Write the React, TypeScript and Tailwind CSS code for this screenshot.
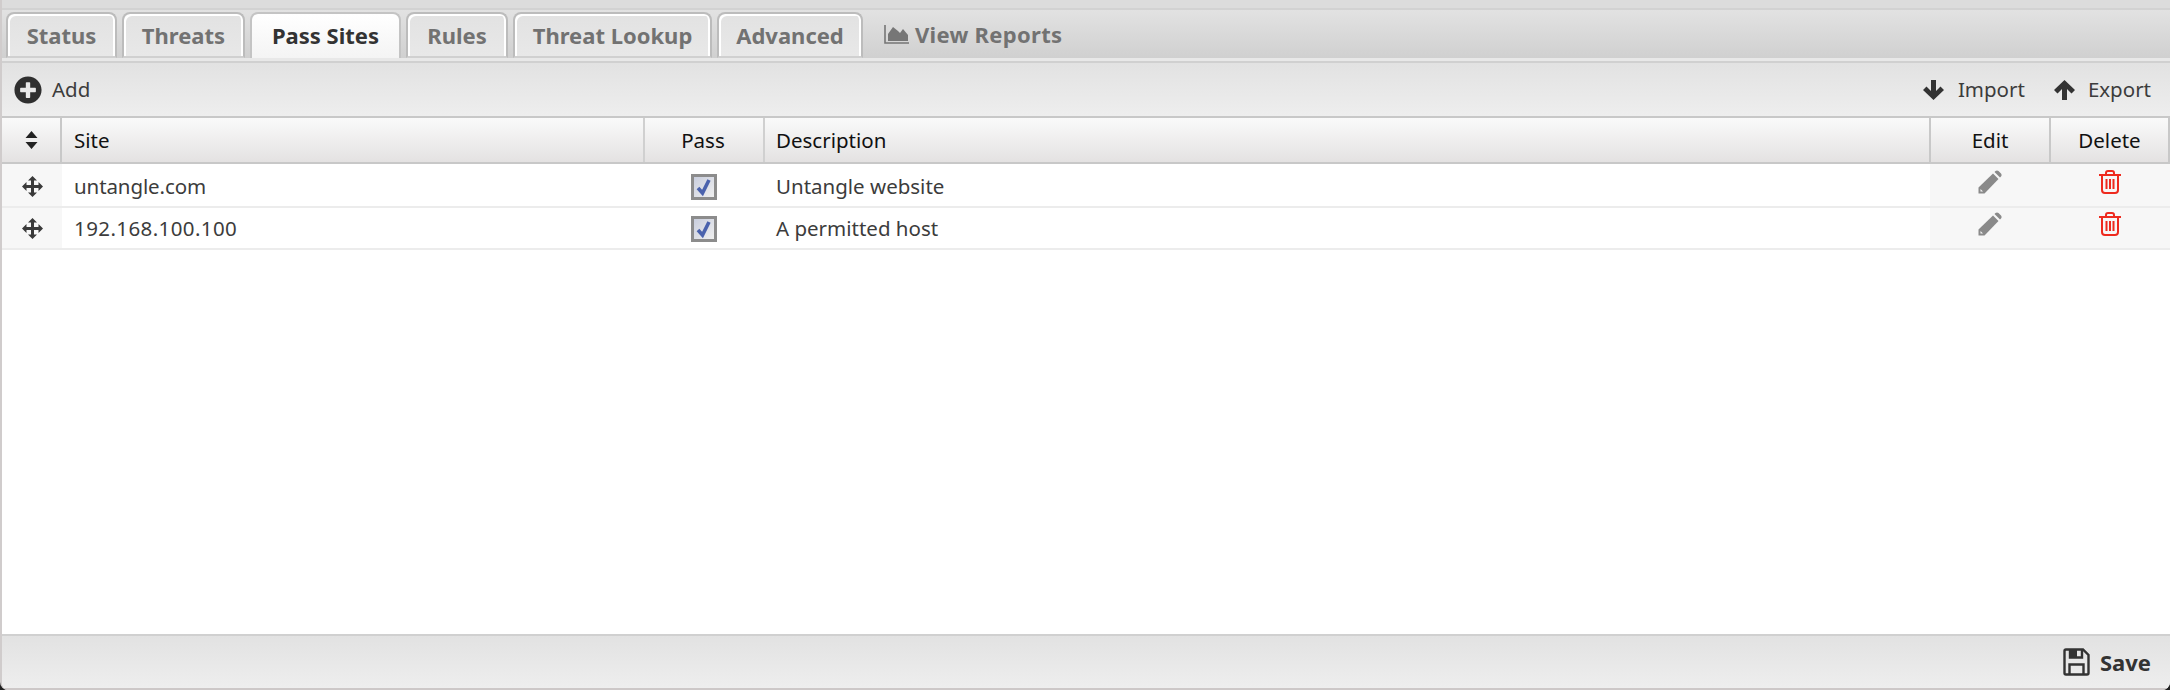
import { FaPlusCircle } from "react-icons/fa";

const tabs = [
  { label: "Status", width: "w-[111px]" },
  { label: "Threats", width: "w-[123px]" },
  { label: "Pass Sites", width: "w-[151px]", active: true },
  { label: "Rules", width: "w-[102px]" },
  { label: "Threat Lookup", width: "w-[199px]" },
  { label: "Advanced", width: "w-[146px]" },
];

const rows = [
  { site: "untangle.com", description: "Untangle website", height: "h-[44px]", textPad: "pt-[3px]", iconPad: "pt-[6px]", siteText: "tracking-[-0.1px]" },
  { site: "192.168.100.100", description: "A permitted host", height: "h-[42px]", textPad: "pt-[1px]", iconPad: "pt-[4px]", siteText: "tracking-[0.4px]" },
];

function Checkbox() {
  return (
    <div className="w-[26px] h-[26px] border-[3px] border-[#8c8c8c] bg-gradient-to-br from-[#c9cede] to-[#efefef] flex items-center justify-center">
      <svg viewBox="0 0 20 20" className="w-[20px] h-[20px]">
        <path d="M4 11 L8.5 16 L15 3" fill="none" stroke="#4a62ad" strokeWidth="3.6" />
      </svg>
    </div>
  );
}

function ArrowDown() {
  return (
    <svg viewBox="0 0 21 20" className="w-[21px] h-[20px] fill-[#333]">
      <path d="M8 0 H13 V11 L17.5 6.5 L21 10 L10.5 20 L0 10 L3.5 6.5 L8 11 Z" />
    </svg>
  );
}

function ArrowUp() {
  return (
    <svg viewBox="0 0 21 20" className="w-[21px] h-[20px] fill-[#333]">
      <path d="M8 20 H13 V9 L17.5 13.5 L21 10 L10.5 0 L0 10 L3.5 13.5 L8 9 Z" />
    </svg>
  );
}

function SortIcon() {
  return (
    <svg viewBox="0 0 13 18" className="w-[13px] h-[18px] fill-[#222]">
      <path d="M6.5 0 L12.5 7 H0.5 Z M6.5 18 L12.5 11 H0.5 Z" />
    </svg>
  );
}

function MoveIcon() {
  return (
    <svg viewBox="0 0 21 21" className="w-[21px] h-[21px] fill-[#3a3a3a]">
      <path d="M10.5 0 L15 4.5 H12 V9 H16.5 V6 L21 10.5 L16.5 15 V12 H12 V16.5 H15 L10.5 21 L6 16.5 H9 V12 H4.5 V15 L0 10.5 L4.5 6 V9 H9 V4.5 H6 Z" />
    </svg>
  );
}

function PencilIcon() {
  return (
    <svg viewBox="0 0 24 24" className="w-[24px] h-[24px] fill-[#8a8a8a]">
      <path d="M0.5 17.5 L15 3.5 L20.5 9 L6.5 23.5 H0.5 Z" />
      <path d="M16.5 2 L17.5 1 Q19 -0.2 20.5 1 L23 3.5 Q24.2 5 23 6.5 L22 7.5 Z" />
      <path d="M2.5 19 L5 21.5 H2.5 Z" fill="#f7f7f7" />
    </svg>
  );
}

function TrashIcon() {
  return (
    <svg viewBox="0 0 22 24" className="w-[22px] h-[24px] fill-none stroke-[#ee2a1e] stroke-2">
      <path d="M0 5 H22" />
      <path d="M7 5 V3 Q7 1 9 1 H13 Q15 1 15 3 V5" />
      <path d="M3 5 V20 Q3 23 6 23 H16 Q19 23 19 20 V5" />
      <path d="M7.5 9 V19 M11 9 V19 M14.5 9 V19" />
    </svg>
  );
}

function SaveIcon() {
  return (
    <svg viewBox="0 0 27 28" className="w-[27px] h-[28px] fill-none stroke-[#333] stroke-[2.4]">
      <path d="M3 1.5 H20 L25.5 7 V25 Q25.5 26.5 24 26.5 H3 Q1.5 26.5 1.5 25 V3 Q1.5 1.5 3 1.5 Z" />
      <path d="M7 1.5 V9.5 H19 V1.5" />
      <path d="M6.5 26.5 V16.5 H20.5 V26.5" />
      <rect x="8" y="2" width="6" height="7" fill="#333" stroke="none" />
    </svg>
  );
}

function ChartIcon() {
  return (
    <svg viewBox="0 0 25 19" className="w-[25px] h-[19px]">
      <path d="M1 0 V18 H25" fill="none" stroke="#767676" strokeWidth="1.6" />
      <path d="M4 16 V9 L9 2 L14 6 L16 8 L19 4 L24 10 V16 Z" fill="#767676" />
    </svg>
  );
}

export default function App() {
  return (
    <div className="w-[2170px] h-[690px] bg-[#222] overflow-hidden">
      <div className="w-full h-full flex flex-col bg-white font-['Noto_Sans',sans-serif] border-l-2 border-[#d0cccc] rounded-b-[8px] overflow-hidden">
        <div className="h-[10px] bg-[#dcdcdc] border-b-2 border-[#d2d2d2] shrink-0" />

        {/* tabs */}
        <div className="h-[48px] shrink-0 bg-gradient-to-b from-[#e2e2e2] to-[#d0d0d0] flex items-end pl-[4px] gap-[5px]">
          {tabs.map((tab) => (
            <div
              key={tab.label}
              className={
                tab.active
                  ? `${tab.width} h-[46px] pb-[2px] bg-gradient-to-b from-white to-[#f4f4f4] border-2 border-b-0 border-[#c4c4c4] rounded-t-[8px] flex items-center justify-center font-bold text-[22px] text-[#333]`
                  : `${tab.width} h-[46px] bg-gradient-to-b from-[#e2e2e2] to-[#e8e8e8] border-2 border-b-2 border-[#bcbcbc] border-b-[#d0d0d0] rounded-t-[8px] shadow-[inset_2px_2px_0_#fff,inset_-2px_0_0_#fff] flex items-center justify-center font-bold text-[22px] text-[#727272]`
              }
            >
              {tab.label}
            </div>
          ))}
          <div className="h-[46px] pb-[2px] ml-[16px] flex items-center gap-[6px] font-bold text-[22px] tracking-[0.3px] text-[#727272]">
            <ChartIcon />
            View Reports
          </div>
        </div>
        <div className="h-[3px] shrink-0 bg-[#e8e8e8]" />

        {/* top toolbar */}
        <div className="h-[55px] shrink-0 border-t-2 border-[#d0d0d0] bg-gradient-to-b from-[#e2e2e2] to-[#eeeeee] flex items-center justify-between pl-[12px] pr-[19px] text-[20.5px] text-[#3c3c3c]">
          <div className="flex items-center gap-[10px]">
            <FaPlusCircle className="w-[28px] h-[28px] text-[#2f2f2f]" />
            Add
          </div>
          <div className="flex items-center">
            <ArrowDown />
            <span className="ml-[14px]">Import</span>
            <span className="ml-[29px]">
              <ArrowUp />
            </span>
            <span className="ml-[13px]">Export</span>
          </div>
        </div>

        {/* grid header */}
        <div className="h-[48px] shrink-0 border-y-2 border-[#c8c8c8] bg-gradient-to-b from-[#fafafa] to-[#e4e2e2] flex text-[20.5px] text-[#111]">
          <div className="w-[60px] border-r-2 border-[#c8c8c8] flex items-center justify-center">
            <SortIcon />
          </div>
          <div className="w-[583px] border-r-2 border-[#d0d0d0] flex items-center pl-[12px]">Site</div>
          <div className="w-[120px] border-r-2 border-[#d0d0d0] flex items-center justify-center pr-[2px]">Pass</div>
          <div className="flex-1 border-r-2 border-[#c8c8c8] flex items-center pl-[11px]">Description</div>
          <div className="w-[120px] border-r-2 border-[#c8c8c8] flex items-center justify-center">Edit</div>
          <div className="w-[119px] border-r-2 border-[#c8c8c8] flex items-center justify-center">Delete</div>
        </div>

        {/* rows */}
        <div className="flex-1 flex flex-col">
          {rows.map((row) => (
            <div key={row.site} className={`${row.height} flex border-b-2 border-[#ececec] text-[20.5px] text-[#3c3c3c]`}>
              <div className={`w-[60px] bg-[#f7f7f7] flex items-center justify-center ${row.textPad}`}>
                <MoveIcon />
              </div>
              <div className={`w-[583px] flex items-center pl-[12px] ${row.textPad} ${row.siteText}`}>{row.site}</div>
              <div className={`w-[120px] flex items-center justify-center pr-[2px] ${row.textPad}`}>
                <Checkbox />
              </div>
              <div className={`flex-1 flex items-center pl-[11px] ${row.textPad}`}>{row.description}</div>
              <div className={`w-[120px] bg-[#f7f7f7] flex items-start justify-center ${row.iconPad}`}>
                <PencilIcon />
              </div>
              <div className={`w-[120px] bg-[#f7f7f7] flex items-start justify-center ${row.iconPad}`}>
                <TrashIcon />
              </div>
            </div>
          ))}
        </div>

        {/* bottom toolbar */}
        <div className="h-[56px] shrink-0 border-t-2 border-b-2 border-t-[#d0d0d0] border-b-[#cdc8c8] bg-gradient-to-b from-[#e2e2e2] to-[#eeeeee] flex items-center justify-end pr-[19px] gap-[10px] font-bold text-[22px] text-[#333]">
          <SaveIcon />
          Save
        </div>
      </div>
    </div>
  );
}
